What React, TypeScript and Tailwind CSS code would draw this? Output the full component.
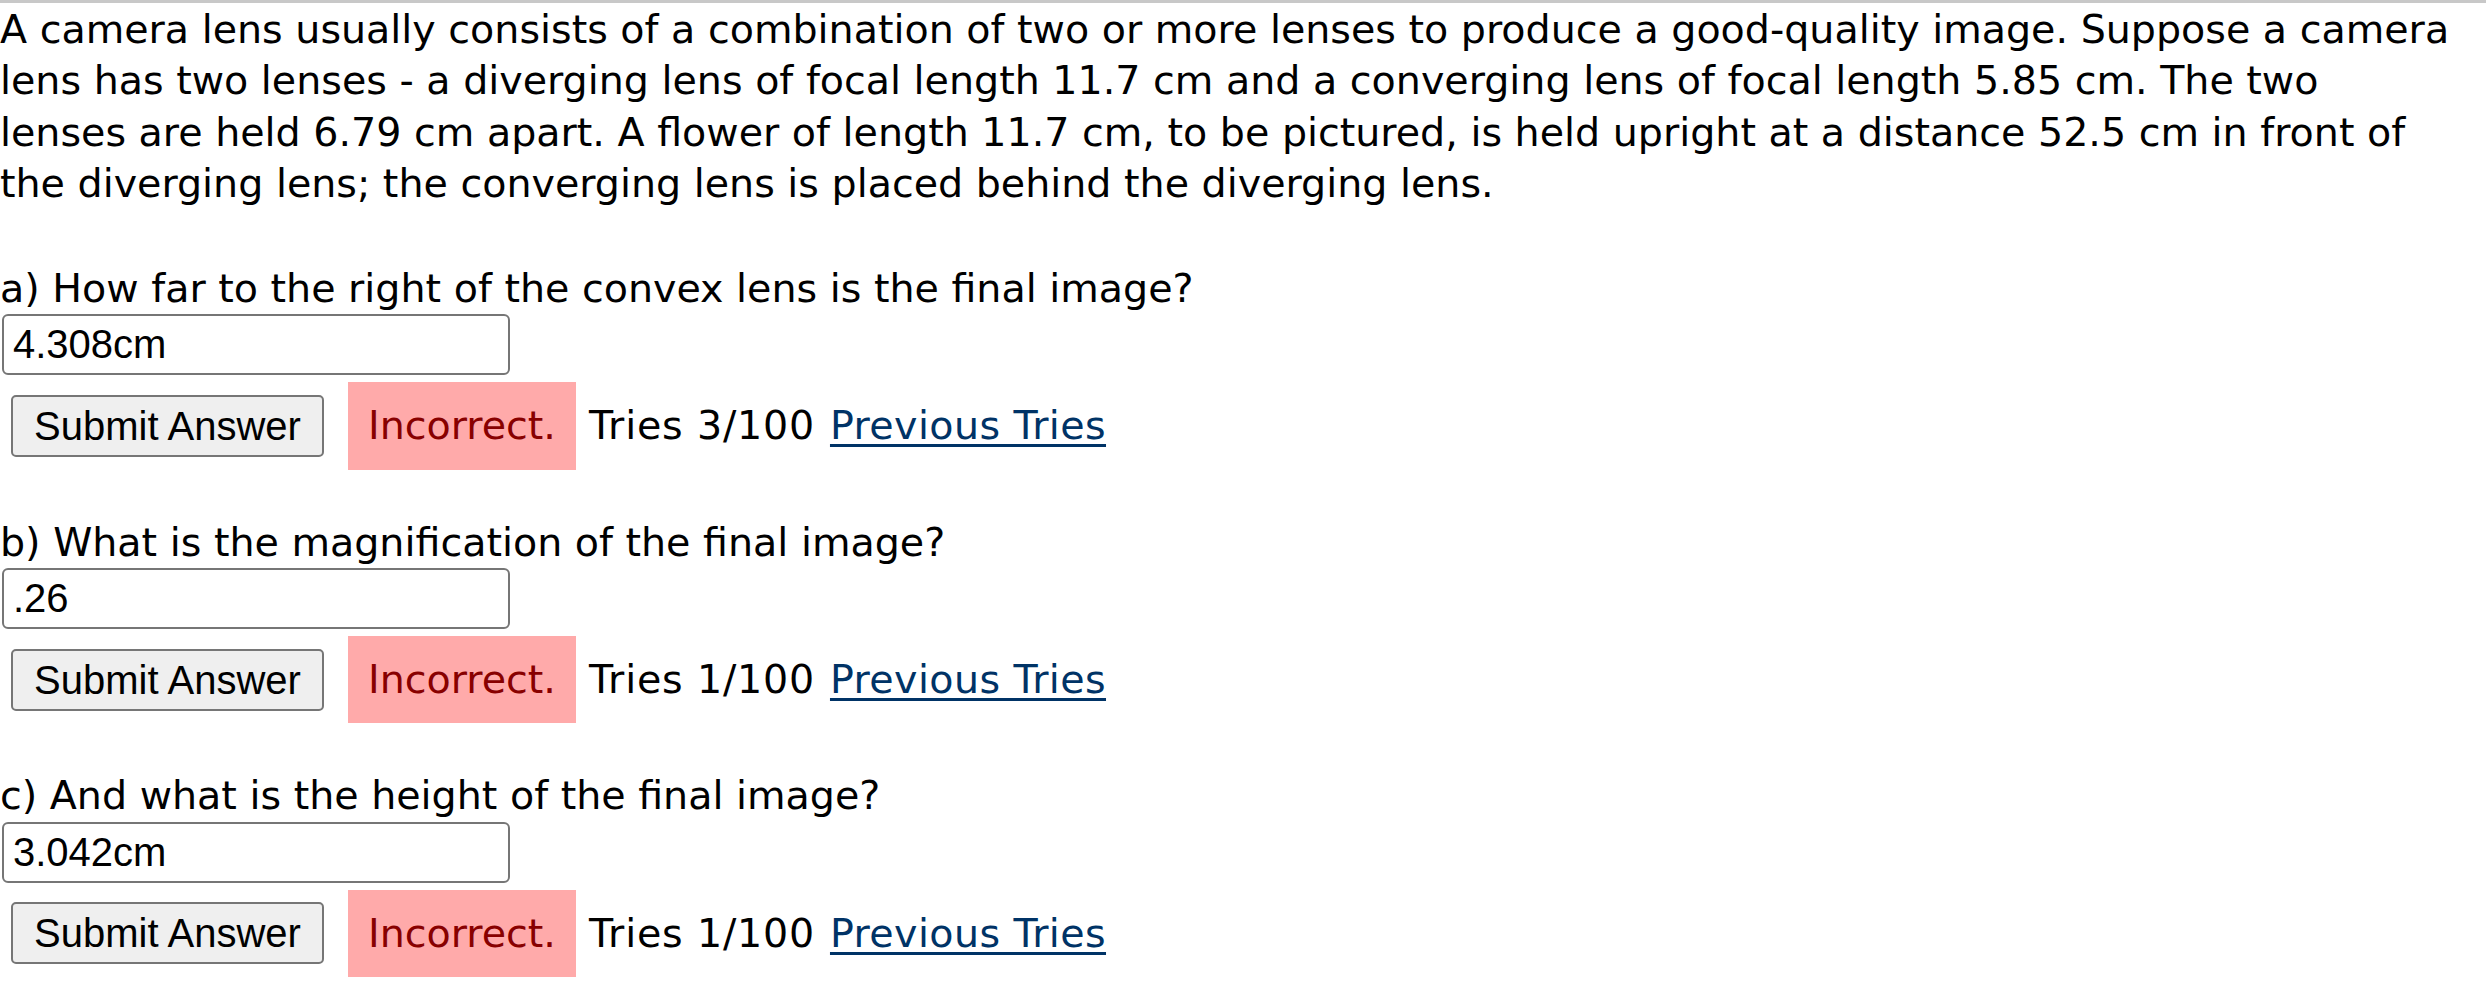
import React from "react";

interface Part {
  label: string;
  answer: string;
  tries: string;
}

const PARTS: Part[] = [
  { label: "a) How far to the right of the convex lens is the final image?", answer: "4.308cm", tries: "3/100" },
  { label: "b) What is the magnification of the final image?", answer: ".26", tries: "1/100" },
  { label: "c) And what is the height of the final image?", answer: "3.042cm", tries: "1/100" },
];

const body = "font-['DejaVu_Sans',Verdana,sans-serif] text-[39.6px] leading-[51.3px] text-black";
const control = "font-['Liberation_Sans',Arial,sans-serif] text-[40px] text-black";

function QuestionPart({ part }: { part: Part }) {
  return (
    <div className="flex flex-col">
      <div className={body}>{part.label}</div>
      <input
        type="text"
        defaultValue={part.answer}
        className={`${control} ml-[2px] h-[61px] w-[508px] rounded-[6px] border-2 border-[#767676] bg-white pl-[9px] outline-none`}
      />
      <div className={`${body} mt-[7px] flex items-center`}>
        <button
          type="button"
          className={`${control} ml-[11px] h-[62px] w-[313px] rounded-[5px] border-2 border-[#767676] bg-[#efefef] leading-none`}
        >
          Submit Answer
        </button>
        <span className="ml-[24px] bg-[#ffaaaa] px-[20px] py-[18px] text-[#880000]">Incorrect.</span>
        <span className="ml-[13px] tracking-[0.8px]">Tries {part.tries}</span>
        <a href="#" className="ml-[15px] tracking-[0.4px] text-[#003366] underline decoration-[2.5px] underline-offset-[5px]">
          Previous Tries
        </a>
      </div>
    </div>
  );
}

export default function App() {
  return (
    <div className="min-h-screen w-full bg-white">
      <div className="h-[3px] w-full bg-[#c8c8c8]" />
      <p className={`${body} mt-[1px] whitespace-nowrap`}>
        A camera lens usually consists of a combination of two or more lenses to produce a good-quality image. Suppose a camera
        <br />
        lens has two lenses - a diverging lens of focal length 11.7 cm and a converging lens of focal length 5.85 cm. The two
        <br />
        lenses are held 6.79 cm apart. A flower of length 11.7 cm, to be pictured, is held upright at a distance 52.5 cm in front of
        <br />
        the diverging lens; the converging lens is placed behind the diverging lens.
      </p>
      <div className="mt-[54px] flex flex-col gap-[47px]">
        {PARTS.map((part, i) => (
          <QuestionPart key={i} part={part} />
        ))}
      </div>
    </div>
  );
}
